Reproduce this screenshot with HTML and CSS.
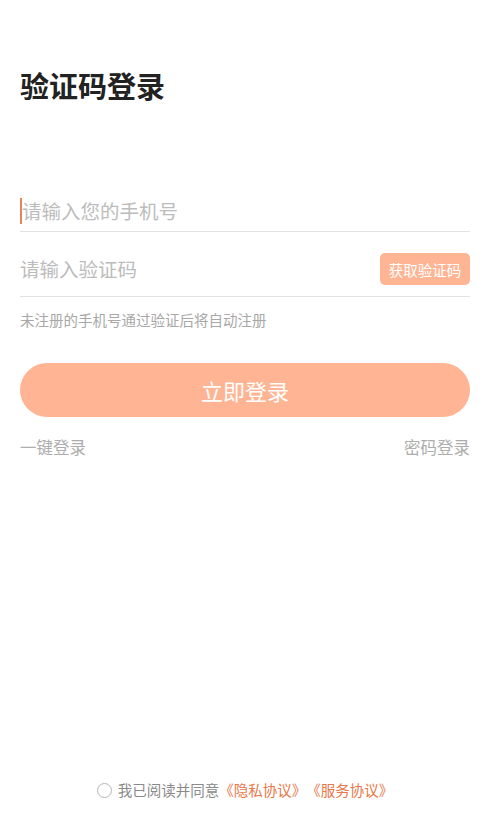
FILE: index.html
```html
<!DOCTYPE html>
<html lang="zh-CN">
<head>
<meta charset="utf-8">
<title>验证码登录</title>
<link rel="stylesheet" href="styles.css">
</head>
<body>
<div class="page">
  <h1 class="title">验证码登录</h1>
  <div class="field field-phone">
    <span class="caret"></span><span class="placeholder">请输入您的手机号</span>
  </div>
  <div class="field field-code">
    <span class="placeholder">请输入验证码</span>
    <button class="code-btn" type="button">获取验证码</button>
  </div>
  <p class="hint">未注册的手机号通过验证后将自动注册</p>
  <button class="login-btn" type="button">立即登录</button>
  <div class="links">
    <span class="link">一键登录</span>
    <span class="link">密码登录</span>
  </div>
  <div class="agree">
    <span class="radio"></span>
    <span class="agree-text">我已阅读并同意</span><span class="agree-link">《隐私协议》</span><span class="agree-link">《服务协议》</span>
  </div>
</div>
</body>
</html>
```
FILE: styles.css
```css
html, body {
  margin: 0;
  padding: 0;
  background: #ffffff;
}
body {
  font-family: "Noto Sans CJK SC", "Noto Sans", sans-serif;
}
.page {
  box-sizing: border-box;
  min-height: 100vh;
  padding: 0 16px 0 20px;
  display: flex;
  flex-direction: column;
}
.title {
  margin: 65px 0 0 0;
  font-size: 29px;
  line-height: 40px;
  font-weight: 700;
  color: #222222;
}
.field {
  display: flex;
  align-items: center;
  border-bottom: 1px solid #e2e2e2;
}
.field-phone {
  margin-top: 85px;
  height: 41px;
}
.field-code {
  padding: 21px 0 11px 0;
  justify-content: space-between;
}
.placeholder {
  font-size: 19.5px;
  color: #bcbcbc;
  line-height: 26px;
}
.caret {
  display: inline-block;
  width: 2px;
  height: 26px;
  background: #e8845a;
}
.code-btn {
  border: none;
  background: #ffb594;
  color: #ffffff;
  font-family: inherit;
  font-size: 14.5px;
  height: 32px;
  width: 90px;
  padding: 0;
  border-radius: 5px;
}
.hint {
  margin: 13px 0 0 0;
  font-size: 14.5px;
  line-height: 20px;
  color: #a8a8a8;
}
.login-btn {
  margin-top: 33px;
  height: 54px;
  border: none;
  border-radius: 27px;
  background: #ffb594;
  color: #ffffff;
  font-family: inherit;
  font-size: 22px;
  padding: 0;
}
.links {
  margin-top: 18px;
  display: flex;
  justify-content: space-between;
  font-size: 16.5px;
  line-height: 24px;
  color: #adadad;
}
.agree {
  margin-top: auto;
  padding-bottom: 40px;
  display: flex;
  align-items: center;
  justify-content: center;
  font-size: 14.5px;
  line-height: 20px;
}
.radio {
  box-sizing: border-box;
  width: 15px;
  height: 15px;
  border: 1px solid #b5b5b5;
  border-radius: 50%;
  margin-right: 6px;
}
.agree-text {
  color: #8a8a8a;
}
.agree-link {
  color: #e8784a;
}
```
